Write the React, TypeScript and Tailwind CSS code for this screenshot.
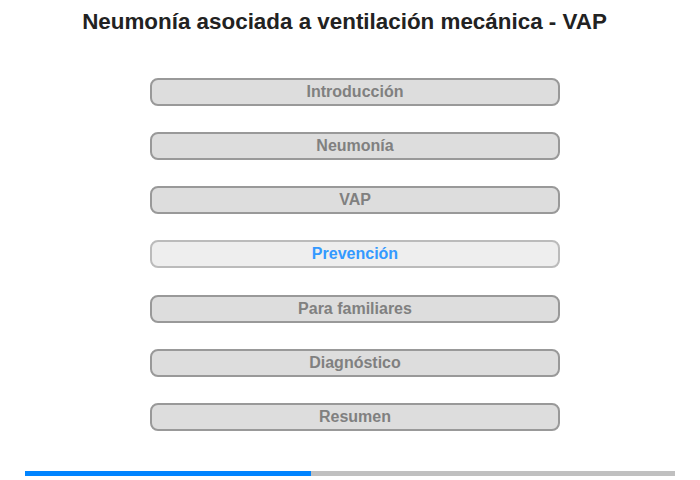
import React from "react";

const items = [
  "Introducción",
  "Neumonía",
  "VAP",
  "Prevención",
  "Para familiares",
  "Diagnóstico",
  "Resumen",
];

export default function App() {
  return (
    <div className="w-[700px] h-[480px] bg-white" style={{ fontFamily: '"Liberation Sans", Arial, sans-serif' }}>
      <h1 className="pt-[7px] pr-[11px] text-center text-[22.4px] leading-[30px] font-bold text-[#222222]">
        Neumonía asociada a ventilación mecánica - VAP
      </h1>
      <div className="ml-[150px] mt-[41px] flex w-[410px] flex-col gap-[26.17px]">
        {items.map((it) =>
          it === "Prevención" ? (
            <div
              key={it}
              className="flex h-[28px] items-center justify-center rounded-[8px] border-2 border-[#bbbbbb] bg-[#eeeeee] text-[16px] font-bold text-[#3399ff]"
            >
              {it}
            </div>
          ) : (
            <div
              key={it}
              className="flex h-[28px] items-center justify-center rounded-[8px] border-2 border-[#999999] bg-[#dddddd] text-[16px] font-bold text-[#808080]"
            >
              {it}
            </div>
          )
        )}
      </div>
      <div className="mx-auto mt-[40px] flex h-[5px] w-[650px] bg-[#c0c0c0]">
        <div className="h-full w-[286px] bg-[#0084ff]" />
      </div>
    </div>
  );
}
